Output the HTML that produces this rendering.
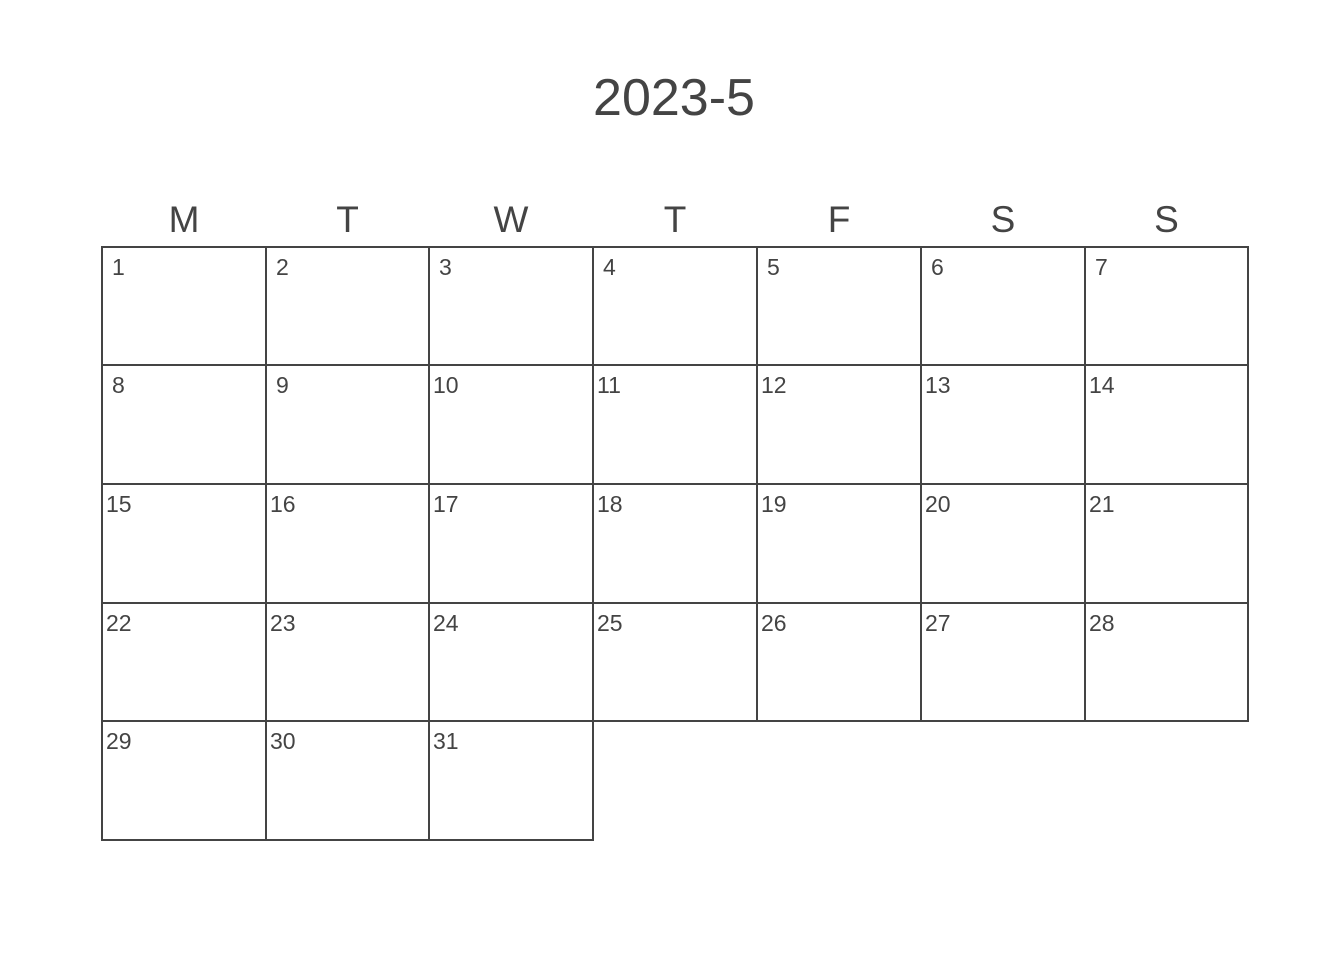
<!DOCTYPE html>
<html><head><meta charset="utf-8"><style>
html,body{margin:0;padding:0;background:#fff;width:1344px;height:960px;overflow:hidden}
body{position:relative;font-family:"Liberation Sans",Arial,sans-serif;color:#444}
.t{position:absolute;line-height:1;white-space:nowrap}
.v{position:absolute;width:2px;background:#444}
.h{position:absolute;height:2px;background:#444}
</style></head><body>
<div class="t" style="left:0;width:1348px;text-align:center;top:72px;font-size:52px">2023-5</div>
<div id="g"></div>
<script>
var xs=[102,266,429,593,757,921,1085,1248];
var ys=[247,365,484,603,721,840];
var g=document.getElementById('g'),h='';
var days=['M','T','W','T','F','S','S'];
for(var i=0;i<7;i++){h+='<div class="t" style="left:'+xs[i]+'px;width:'+(xs[i+1]-xs[i])+'px;text-align:center;top:201px;font-size:37px">'+days[i]+'</div>';}
for(var r=0;r<6;r++){var w=(r==5)?(xs[3]-xs[0]):(xs[7]-xs[0]);h+='<div class="h" style="left:'+(xs[0]-1)+'px;top:'+(ys[r]-1)+'px;width:'+(w+2)+'px"></div>';}
for(var c=0;c<8;c++){var bottom=(c<=3)?ys[5]:ys[4];h+='<div class="v" style="left:'+(xs[c]-1)+'px;top:'+(ys[0]-1)+'px;height:'+(bottom-ys[0]+2)+'px"></div>';}
for(var d=1;d<=31;d++){var idx=d-1,r=Math.floor(idx/7),c=idx%7;var off=d<10?10:4;h+='<div class="t" style="left:'+(xs[c]+off)+'px;top:'+(ys[r]+9)+'px;font-size:23px">'+d+'</div>';}
g.innerHTML=h;
</script>
</body></html>
